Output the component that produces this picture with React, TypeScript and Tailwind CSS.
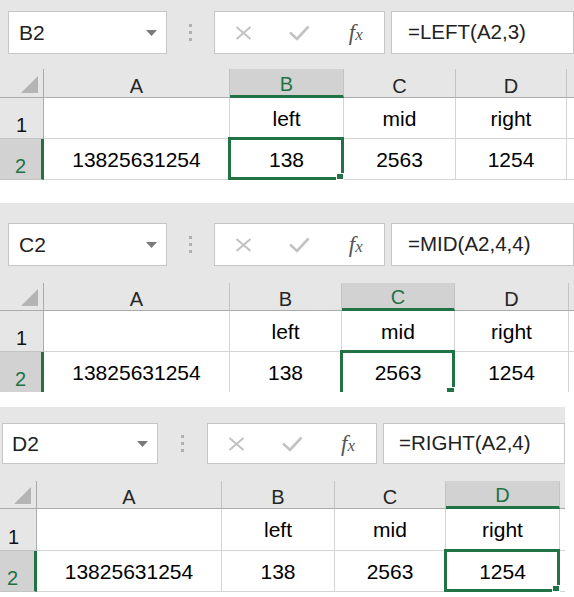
import React from 'react';

type PanelProps = {
  name: string;
  formula: string;
  selected: number;
  wrap: string;
  bar: string;
  nameBox: string;
  nameText: string;
  dotSlot: string;
  btnBox: string;
  formulaText: string;
  cols: string[];
  headH: string;
  rowH: string[];
  rowNum: string;
  cut?: boolean;
};

const rows = [
  ['', 'left', 'mid', 'right'],
  ['13825631254', '138', '2563', '1254'],
];
const letters = ['A', 'B', 'C', 'D'];

function Cross() {
  return (
    <svg width="17" height="14" viewBox="0 0 17 14">
      <path d="M1.5 1 L15.5 13 M15.5 1 L1.5 13" stroke="#c2c2c2" strokeWidth="2" />
    </svg>
  );
}

function Check() {
  return (
    <svg width="22" height="16" viewBox="0 0 22 16">
      <path d="M2 7.5 L9 14 L20.5 1.5" stroke="#c2c2c2" strokeWidth="2.6" fill="none" />
    </svg>
  );
}

function Panel(p: PanelProps) {
  return (
    <div className={`${p.wrap} bg-white`}>
      {/* name box + formula bar */}
      <div className={`${p.bar} flex bg-[#e6e6e6]`}>
        <div className={`${p.nameBox} flex items-center justify-between border border-[#c6c6c6] bg-white`}>
          <span className={`${p.nameText} text-[21px] leading-none text-[#222]`}>{p.name}</span>
          <svg width="11" height="6" viewBox="0 0 11 6" className="mr-[9px]">
            <path d="M0 0 H11 L5.5 6 Z" fill="#7a7a7a" />
          </svg>
        </div>
        <div className={`${p.dotSlot} flex flex-col items-center justify-center gap-[4px]`}>
          <span className="h-[3px] w-[3px] bg-[#b0b0b0]" />
          <span className="h-[3px] w-[3px] bg-[#b0b0b0]" />
          <span className="h-[3px] w-[3px] bg-[#b0b0b0]" />
        </div>
        <div className={`${p.btnBox} flex border border-[#c6c6c6] bg-white`}>
          <div className="flex flex-1 items-center justify-center">
            <Cross />
          </div>
          <div className="flex flex-1 items-center justify-center">
            <Check />
          </div>
          <div className="flex flex-1 items-center justify-center">
            <span className="font-['Liberation_Serif',serif] text-[23px] italic leading-none text-[#555]">
              f<span className="text-[17px]">x</span>
            </span>
          </div>
        </div>
        <div className={`ml-[6px] flex flex-1 items-center border border-[#c6c6c6] bg-white ${p.nameBox.split(' ').filter((c) => c.startsWith('h-')).join(' ')}`}>
          <span className={`${p.formulaText} text-[20.5px] leading-none text-[#222]`}>{p.formula}</span>
        </div>
      </div>

      {/* column headers */}
      <div className={`${p.headH} flex`}>
        <div className={`${p.cols[0]} flex items-end justify-end border-r border-b border-[#ababab] bg-[#e6e6e6] pr-[5px] pb-[4px]`}>
          <svg width="17" height="17" viewBox="0 0 17 17">
            <path d="M17 0 V17 H0 Z" fill="#b4b4b4" />
          </svg>
        </div>
        {letters.map((l, i) => {
          const sel = i === p.selected - 1;
          return (
            <div
              key={l}
              className={`${p.cols[i + 1]} flex items-end justify-center border-r border-r-[#c4c4c4] pb-[1px] text-[20px] leading-none ${
                sel
                  ? 'border-b-[3px] border-b-[#217346] bg-[#d2d2d2] text-[#217346]'
                  : 'border-b border-b-[#ababab] bg-[#e6e6e6] text-[#262626]'
              }`}
            >
              {l}
            </div>
          );
        })}
        <div className="flex-1 border-b border-[#ababab] bg-[#e6e6e6]" />
      </div>

      {/* rows */}
      {rows.map((r, ri) => {
        const last = ri === 1;
        const noBottom = last && p.cut;
        return (
          <div key={ri} className={`${p.rowH[ri]} flex`}>
            <div
              className={`${p.cols[0]} ${p.rowNum} flex items-end justify-center pb-[3px] text-[20px] leading-none ${
                last
                  ? 'border-r-[3px] border-r-[#217346] bg-[#d2d2d2] text-[#217346]'
                  : 'border-r border-r-[#ababab] bg-[#e6e6e6] text-[#111]'
              } ${noBottom ? '' : 'border-b border-b-[#c4c4c4]'}`}
            >
              {ri + 1}
            </div>
            {r.map((v, ci) => {
              const sel = last && ci === p.selected - 1;
              return (
                <div
                  key={ci}
                  className={`${p.cols[ci + 1]} relative flex items-center justify-center border-r border-[#d4d4d4] text-[21px] leading-none text-black ${
                    noBottom ? '' : 'border-b'
                  } ${sel ? 'z-10' : ''}`}
                >
                  {v}
                  {sel && !p.cut && (
                    <div className="absolute -top-[2px] -right-[1px] -bottom-[1px] -left-[2px] border-[3px] border-[#217346]">
                      <div className="absolute -right-[3px] -bottom-[3px] h-[7px] w-[8px] border border-white bg-[#217346]" />
                    </div>
                  )}
                  {sel && p.cut && (
                    <div className="absolute -top-[2px] -right-[1px] bottom-0 -left-[2px] border-x-[3px] border-t-[3px] border-[#217346]">
                      <div className="absolute -right-[3px] bottom-0 h-[5px] w-[9px] border-x border-t border-white bg-[#217346]" />
                    </div>
                  )}
                </div>
              );
            })}
            <div className={`flex-1 bg-white ${noBottom ? '' : 'border-b border-[#d4d4d4]'}`} />
          </div>
        );
      })}
    </div>
  );
}

export default function App() {
  return (
    <div className="h-[597px] w-[574px] overflow-hidden bg-white font-['Liberation_Sans',Arial,sans-serif]">
      <Panel
        name="B2"
        formula="=LEFT(A2,3)"
        selected={2}
        wrap="w-[574px]"
        bar="h-[69px] pt-[11px] pl-[8px]"
        nameBox="w-[159px] h-[43px]"
        nameText="pl-[10px]"
        dotSlot="w-[47px] h-[43px]"
        btnBox="w-[171px] h-[43px]"
        formulaText="pl-[16px]"
        cols={['w-[44px]', 'w-[186px]', 'w-[114px]', 'w-[112px]', 'w-[111px]']}
        headH="h-[29px]"
        rowH={['h-[41px]', 'h-[41px]']}
        rowNum=""
      />
      <div className="h-[23px] bg-white" />
      <Panel
        name="C2"
        formula="=MID(A2,4,4)"
        selected={3}
        wrap="w-[574px]"
        bar="h-[80px] pt-[20px] pl-[8px]"
        nameBox="w-[159px] h-[43px]"
        nameText="pl-[10px]"
        dotSlot="w-[47px] h-[43px]"
        btnBox="w-[171px] h-[43px]"
        formulaText="pl-[16px]"
        cols={['w-[44px]', 'w-[186px]', 'w-[112px]', 'w-[113px]', 'w-[114px]']}
        headH="h-[28px]"
        rowH={['h-[41px]', 'h-[40px]']}
        rowNum=""
        cut
      />
      <div className="h-[15px] bg-white" />
      <Panel
        name="D2"
        formula="=RIGHT(A2,4)"
        selected={4}
        wrap="w-[565px]"
        bar="h-[74px] pt-[16px] pl-[2px]"
        nameBox="w-[156px] h-[41px]"
        nameText="pl-[9px]"
        dotSlot="w-[49px] h-[41px]"
        btnBox="w-[170px] h-[41px]"
        formulaText="pl-[15px]"
        cols={['w-[37px]', 'w-[185px]', 'w-[113px]', 'w-[111px]', 'w-[114px]']}
        headH="h-[28px]"
        rowH={['h-[42px]', 'h-[41px]']}
        rowNum="pr-[9px]"
      />
    </div>
  );
}
